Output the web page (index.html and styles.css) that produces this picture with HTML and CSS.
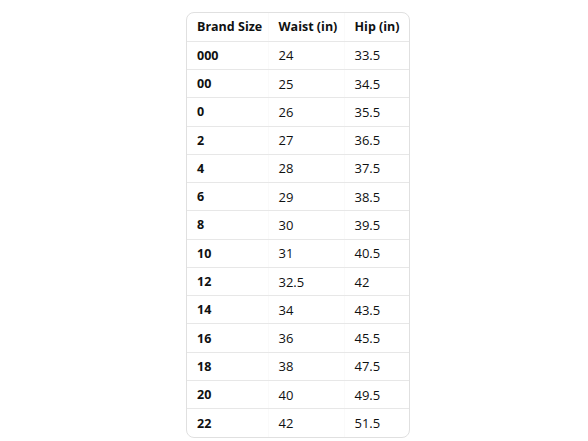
FILE: index.html
```html
<!DOCTYPE html>
<html lang="en">
<head>
<meta charset="utf-8">
<title>Size chart</title>
<link rel="stylesheet" href="styles.css">
</head>
<body>
<div class="chart">
<table class="sizes">
<thead>
<tr><th class="c1">Brand Size</th><th class="c2">Waist (in)</th><th class="c3">Hip (in)</th></tr>
</thead>
<tbody>
<tr><th>000</th><td>24</td><td>33.5</td></tr>
<tr><th>00</th><td>25</td><td>34.5</td></tr>
<tr><th>0</th><td>26</td><td>35.5</td></tr>
<tr><th>2</th><td>27</td><td>36.5</td></tr>
<tr><th>4</th><td>28</td><td>37.5</td></tr>
<tr><th>6</th><td>29</td><td>38.5</td></tr>
<tr><th>8</th><td>30</td><td>39.5</td></tr>
<tr><th>10</th><td>31</td><td>40.5</td></tr>
<tr><th>12</th><td>32.5</td><td>42</td></tr>
<tr><th>14</th><td>34</td><td>43.5</td></tr>
<tr><th>16</th><td>36</td><td>45.5</td></tr>
<tr><th>18</th><td>38</td><td>47.5</td></tr>
<tr><th>20</th><td>40</td><td>49.5</td></tr>
<tr><th>22</th><td>42</td><td>51.5</td></tr>
</tbody>
</table>
</div>
</body>
</html>
```
FILE: styles.css
```css
html, body {
  margin: 0;
  background: #ffffff;
}
body {
  padding: 12px 0 0 186px;
  font-family: "Open Sans", "Liberation Sans", sans-serif;
  color: #0f1111;
}
.chart {
  width: 222px;
  border: 1px solid #e0e0e0;
  border-radius: 8px;
  overflow: hidden;
}
.sizes {
  width: 100%;
  border-collapse: collapse;
  table-layout: fixed;
  font-size: 13px;
}
.sizes th, .sizes td {
  height: 28.27px;
  padding: 0 0 0 10px;
  text-align: left;
  vertical-align: middle;
  border-bottom: 1px solid #e7e7e7;
  border-right: 1px solid #fafafa;
  box-sizing: border-box;
  white-space: nowrap;
}
.sizes th {
  font-weight: 700;
  font-size: 12.5px;
}
.sizes td { font-weight: 400; }
.sizes tr > :last-child { border-right: none; }
.sizes tbody tr:last-child > * { border-bottom: none; }
.c1 { width: 81px; }
.c2 { width: 76px; }
.c3 { width: 65px; }
```
